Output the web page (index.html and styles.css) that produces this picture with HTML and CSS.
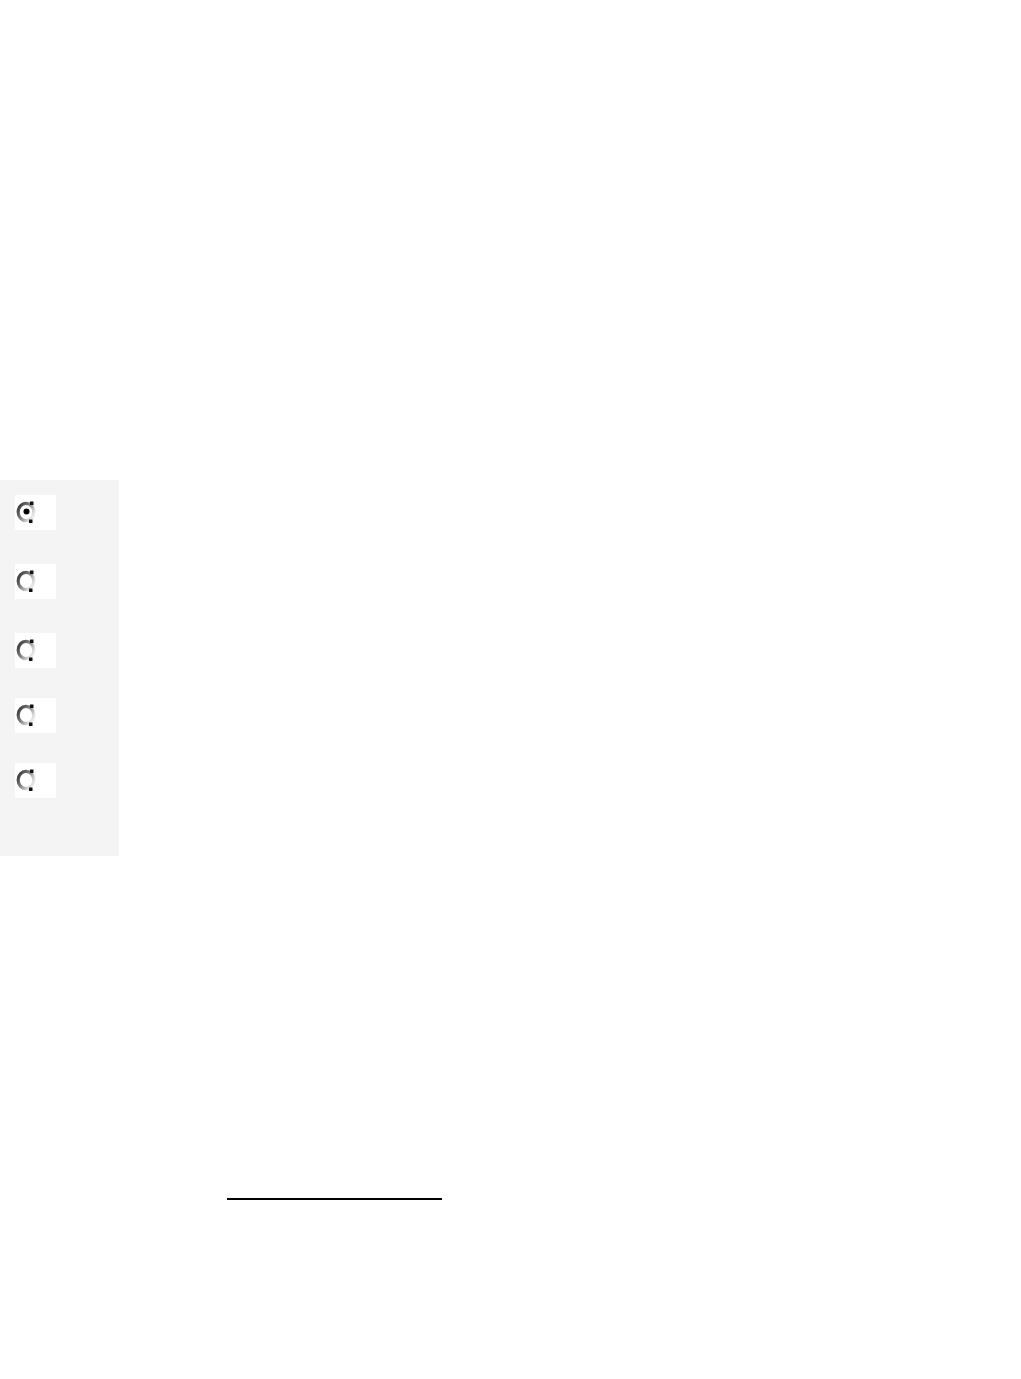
FILE: index.html
```html
<!DOCTYPE html>
<html>
<head>
<meta charset="utf-8">
<link rel="stylesheet" href="styles.css">
</head>
<body>
<div class="page">
  <div class="top-space"></div>
  <div class="panel">
    <div class="opt wide-gap"><svg class="radio" viewBox="0 0 22 26" width="22" height="26"><defs><linearGradient id="g1" x1="0" y1="0.2" x2="1" y2="0.9"><stop offset="0" stop-color="#3c3c3c"/><stop offset="0.45" stop-color="#8a8a8a"/><stop offset="0.8" stop-color="#dcdcdc"/><stop offset="1" stop-color="#f4f4f4"/></linearGradient></defs><ellipse cx="10" cy="13" rx="7.8" ry="8.6" fill="#fff" stroke="url(#g1)" stroke-width="3.2"/><rect x="14" y="2.5" width="3.5" height="3.5" fill="#111"/><rect x="13" y="20.5" width="3.5" height="3.5" fill="#111"/><circle cx="10.5" cy="12.5" r="3" fill="#000"/></svg></div>
    <div class="opt wide-gap"><svg class="radio" viewBox="0 0 22 26" width="22" height="26"><ellipse cx="10" cy="13" rx="7.8" ry="8.6" fill="#fff" stroke="url(#g1)" stroke-width="3.2"/><rect x="14" y="2.5" width="3.5" height="3.5" fill="#111"/><rect x="13" y="20.5" width="3.5" height="3.5" fill="#111"/></svg></div>
    <div class="opt"><svg class="radio" viewBox="0 0 22 26" width="22" height="26"><ellipse cx="10" cy="13" rx="7.8" ry="8.6" fill="#fff" stroke="url(#g1)" stroke-width="3.2"/><rect x="14" y="2.5" width="3.5" height="3.5" fill="#111"/><rect x="13" y="20.5" width="3.5" height="3.5" fill="#111"/></svg></div>
    <div class="opt"><svg class="radio" viewBox="0 0 22 26" width="22" height="26"><ellipse cx="10" cy="13" rx="7.8" ry="8.6" fill="#fff" stroke="url(#g1)" stroke-width="3.2"/><rect x="14" y="2.5" width="3.5" height="3.5" fill="#111"/><rect x="13" y="20.5" width="3.5" height="3.5" fill="#111"/></svg></div>
    <div class="opt last"><svg class="radio" viewBox="0 0 22 26" width="22" height="26"><ellipse cx="10" cy="13" rx="7.8" ry="8.6" fill="#fff" stroke="url(#g1)" stroke-width="3.2"/><rect x="14" y="2.5" width="3.5" height="3.5" fill="#111"/><rect x="13" y="20.5" width="3.5" height="3.5" fill="#111"/></svg></div>
  </div>
  <div class="bottom">
    <div class="rule"></div>
  </div>
</div>
</body>
</html>
```

FILE: styles.css
```css
html, body {
  margin: 0;
  padding: 0;
  background: #fff;
  font-family: "Liberation Sans", Arial, sans-serif;
}
.page {
  width: 1021px;
  min-height: 1379px;
}
.top-space {
  height: 480px;
}
.panel {
  width: 119px;
  height: 376px;
  background: #f4f4f4;
  box-sizing: border-box;
  padding: 15px 0 0 15px;
  display: flex;
  flex-direction: column;
}
.opt {
  width: 41px;
  height: 35px;
  background: #fff;
  margin-bottom: 30px;
  box-sizing: border-box;
  padding: 4px 0 0 1px;
}
.opt.wide-gap {
  margin-bottom: 34px;
}
.opt.last {
  margin-bottom: 0;
}
.radio {
  display: block;
}
.bottom {
  padding: 342px 0 0 227px;
}
.rule {
  width: 215px;
  height: 2px;
  background: #000;
}
```
